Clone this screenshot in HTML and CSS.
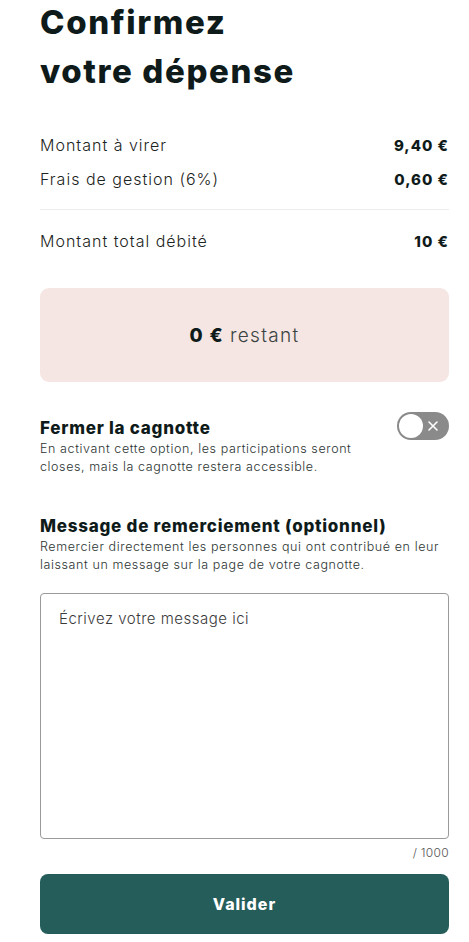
FILE: index.html
```html
<!DOCTYPE html>
<html lang="fr">
<head>
<meta charset="utf-8">
<link rel="stylesheet" href="styles.css">
</head>
<body>
<main class="page">
  <h1 class="title">Confirmez<br>votre dépense</h1>

  <section class="summary">
    <div class="row"><span class="label">Montant à virer</span><span class="value">9,40 €</span></div>
    <div class="row"><span class="label">Frais de gestion (6%)</span><span class="value">0,60 €</span></div>
    <hr class="divider">
    <div class="row"><span class="label">Montant total débité</span><span class="value">10 €</span></div>
  </section>

  <div class="remaining"><strong>0 €</strong> restant</div>

  <section class="option">
    <div class="option-text">
      <h2 class="h2">Fermer la cagnotte</h2>
      <p class="desc">En activant cette option, les participations seront closes, mais la cagnotte restera accessible.</p>
    </div>
    <div class="toggle">
      <span class="knob"></span>
      <svg class="cross" width="12" height="12" viewBox="0 0 12 12"><path d="M2 2L10 10M10 2L2 10" stroke="#fff" stroke-width="1.6" stroke-linecap="round"/></svg>
    </div>
  </section>

  <section class="message">
    <h2 class="h2">Message de remerciement (optionnel)</h2>
    <p class="desc">Remercier directement les personnes qui ont contribué en leur laissant un message sur la page de votre cagnotte.</p>
    <textarea class="textarea" placeholder="Écrivez votre message ici"></textarea>
    <div class="counter">/ 1000</div>
  </section>

  <button class="btn">Valider</button>
</main>
</body>
</html>
```
FILE: styles.css
```css
* { box-sizing: border-box; }
html, body { margin: 0; padding: 0; background: #fff; }
body { font-family: "Inter", "Lato", sans-serif; color: #0f1b1a; }
.page { padding: 0 20px 0 40px; display: flex; flex-direction: column; }
.title { margin: -2px 0 0; font-size: 33px; line-height: 49px; font-weight: 800; letter-spacing: 1.6px; }
.summary { margin-top: 32px; display: flex; flex-direction: column; }
.row { display: flex; justify-content: space-between; align-items: center; height: 34px; }
.label { font-size: 16px; font-weight: 300; color: #1c2422; letter-spacing: 1px; }
.value { font-size: 15px; font-weight: 800; letter-spacing: 1px; }
.divider { border: 0; border-top: 1px solid #ececec; margin: 13px 0 14px; width: 100%; }
.remaining { margin-top: 30px; height: 94px; background: #f5e6e3; border-radius: 9px; display: flex; align-items: center; justify-content: center; gap: 6px; font-size: 19px; font-weight: 300; color: #3a4341; letter-spacing: 1.3px; }
.remaining strong { font-weight: 800; color: #0f1b1a; }
.option { margin-top: 34px; display: flex; justify-content: space-between; align-items: flex-start; }
.option-text { width: 330px; }
.h2 { margin: 0; font-size: 17px; font-weight: 800; line-height: 24px; letter-spacing: 0.75px; }
.desc { margin: 0; font-size: 12.5px; line-height: 18px; font-weight: 300; color: #2c3432; letter-spacing: 0.6px; }
.toggle { position: relative; width: 52px; height: 28px; border-radius: 14px; background: #8a8a8a; margin-top: -4px; flex-shrink: 0; }
.knob { position: absolute; left: 2px; top: 2px; width: 24px; height: 24px; border-radius: 50%; background: #fff; }
.cross { position: absolute; right: 10px; top: 8px; }
.message { margin-top: 38px; display: flex; flex-direction: column; }
.textarea { margin-top: 19px; height: 246px; width: 100%; border: 1.5px solid #9a9a9a; border-radius: 4px; padding: 15px 18px; font-family: inherit; font-size: 15px; font-weight: 300; letter-spacing: 0.5px; resize: none; }
.textarea::placeholder { color: #3a3a3a; }
.counter { text-align: right; font-size: 12px; font-weight: 300; color: #555; margin-top: 6px; line-height: 16px; letter-spacing: 0.3px; }
.btn { margin-top: 13px; height: 60px; border: 0; border-radius: 8px; background: #255d5a; color: #fff; font-family: inherit; font-size: 16px; font-weight: 800; letter-spacing: 1px; width: 100%; }
```
